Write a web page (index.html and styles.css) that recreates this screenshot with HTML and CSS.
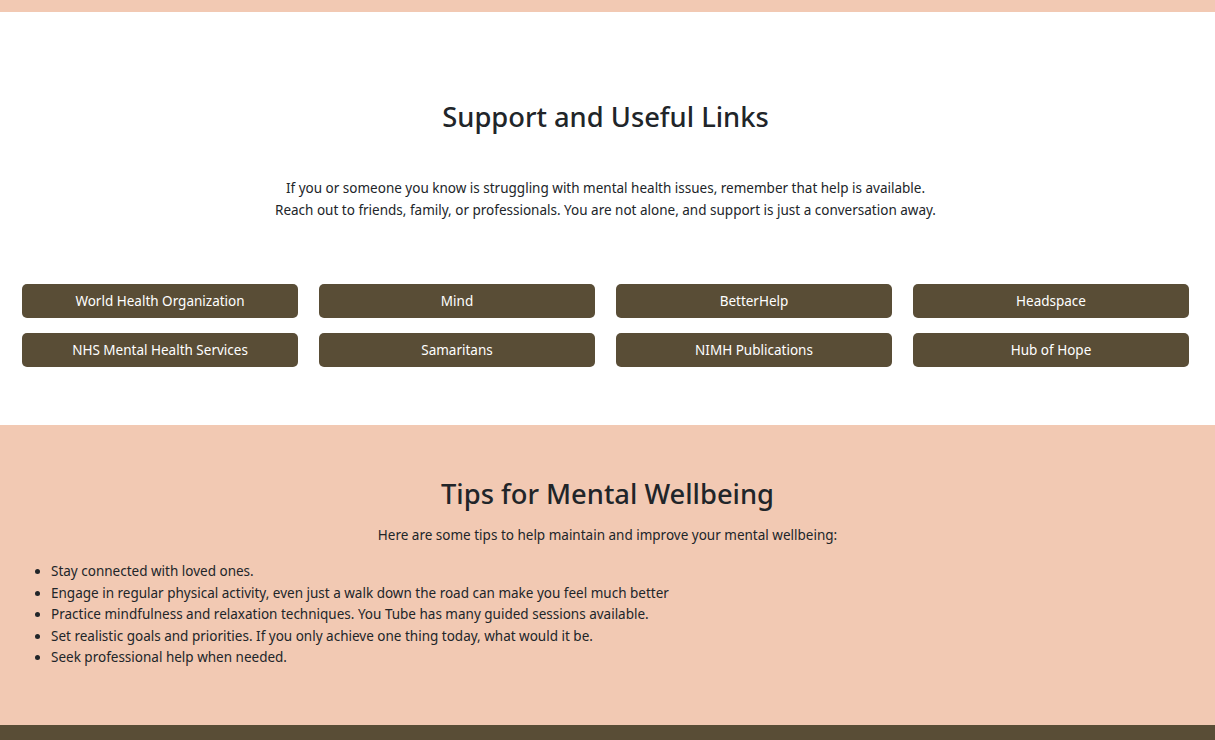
FILE: index.html
```html
<!DOCTYPE html>
<html lang="en">
<head>
<meta charset="utf-8">
<title>Support and Useful Links</title>
<link rel="stylesheet" href="styles.css">
</head>
<body>
<div class="top-band"></div>
<section class="support">
  <h2 class="section-title">Support and Useful Links</h2>
  <p class="intro">If you or someone you know is struggling with mental health issues, remember that help is available.<br>Reach out to friends, family, or professionals. You are not alone, and support is just a conversation away.</p>
  <div class="links">
    <a class="link-btn" href="#">World Health Organization</a>
    <a class="link-btn" href="#">Mind</a>
    <a class="link-btn" href="#">BetterHelp</a>
    <a class="link-btn" href="#">Headspace</a>
    <a class="link-btn" href="#">NHS Mental Health Services</a>
    <a class="link-btn" href="#">Samaritans</a>
    <a class="link-btn" href="#">NIMH Publications</a>
    <a class="link-btn" href="#">Hub of Hope</a>
  </div>
</section>
<section class="tips">
  <h2 class="section-title tips-title">Tips for Mental Wellbeing</h2>
  <p class="tips-intro">Here are some tips to help maintain and improve your mental wellbeing:</p>
  <ul class="tips-list">
    <li>Stay connected with loved ones.</li>
    <li>Engage in regular physical activity, even just a walk down the road can make you feel much better</li>
    <li>Practice mindfulness and relaxation techniques. You Tube has many guided sessions available.</li>
    <li>Set realistic goals and priorities. If you only achieve one thing today, what would it be.</li>
    <li>Seek professional help when needed.</li>
  </ul>
</section>
<footer class="footer"></footer>
</body>
</html>
```

FILE: styles.css
```css
* { box-sizing: border-box; }
html, body { margin: 0; padding: 0; }
body {
  font-family: "Noto Sans", "Open Sans", sans-serif;
  color: #212529;
  font-size: 13.5px;
  background: #fff;
}
.top-band { height: 12px; background: #f2c9b3; }
.support {
  height: 413px;
  padding: 88px 26px 0 22px;
  text-align: center;
}
.section-title {
  margin: 0;
  font-size: 27.3px;
  font-weight: 500;
  line-height: 34px;
}
.intro {
  margin: 44px 0 0;
  line-height: 21.5px;
}
.links {
  margin-top: 63px;
  display: grid;
  grid-template-columns: repeat(4, 1fr);
  column-gap: 21px;
  row-gap: 15px;
}
.link-btn {
  display: block;
  height: 34px;
  line-height: 34px;
  background: #594d36;
  color: #fff;
  text-decoration: none;
  border-radius: 5px;
  font-size: 13.5px;
}
.tips {
  background: #f2c9b3;
  padding: 52px 22px 0;
  height: 300px;
}
.tips-title { text-align: center; }
.tips-intro {
  text-align: center;
  margin: 14px 0 0;
  line-height: 20px;
}
.tips-list {
  margin: 16px 0 0;
  padding-left: 29px;
  line-height: 21.5px;
}
.footer { height: 40px; background: #594d36; }
```
